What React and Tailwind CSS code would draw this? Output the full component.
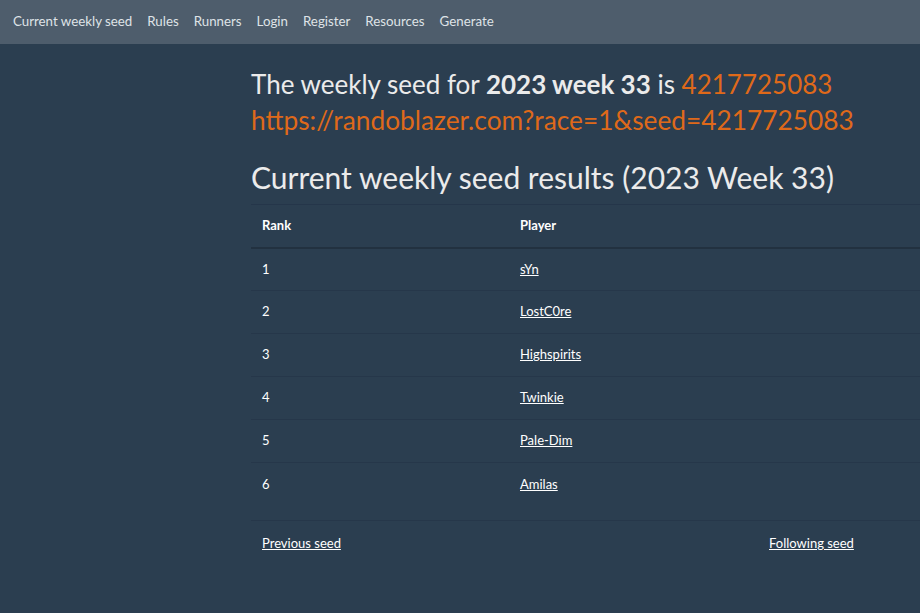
export default function App() {
  const rows = [
    [1, "sYn"],
    [2, "LostC0re"],
    [3, "Highspirits"],
    [4, "Twinkie"],
    [5, "Pale-Dim"],
    [6, "Amilas"],
  ];
  return (
    <div
      className="w-[920px] h-[613px] overflow-hidden bg-[#2b3e50] text-white"
      style={{ fontFamily: "Lato, 'Noto Sans', sans-serif" }}
    >
      <nav className="h-[44px] bg-[#4e5d6c] flex items-center pl-[13px] gap-[15px] text-[13.3px] text-[#dfe3e7]">
        <span>Current weekly seed</span>
        <span>Rules</span>
        <span>Runners</span>
        <span>Login</span>
        <span>Register</span>
        <span>Resources</span>
        <span>Generate</span>
      </nav>
      <div className="ml-[251px] w-[900px] pt-[22px]">
        <div className="text-[26px] leading-[36px] text-[#ebebeb]">
          The weekly seed for <b className="font-bold">2023 week 33</b> is{" "}
          <span className="text-[#df691a]">4217725083</span>
          <br />
          <span className="text-[#df691a] text-[26.3px]">https://randoblazer.com?race=1&amp;seed=4217725083</span>
        </div>
        <h2 className="mt-[21px] text-[30px] leading-[36px] text-[#ebebeb]">
          Current weekly seed results (2023 Week 33)
        </h2>
        <table className="mt-[9px] w-[900px] text-[13px] border-collapse">
          <thead>
            <tr className="border-t border-[#25364a] border-b-2 border-b-[#223140]">
              <th className="text-left font-bold w-[257px] px-[11px] h-[43px]">Rank</th>
              <th className="text-left font-bold px-[12px]">Player</th>
            </tr>
          </thead>
          <tbody>
            {rows.map(([r, p], i) => (
              <tr key={r} className="border-b border-[#26374a]">
                <td className={`px-[11px] ${i < 5 ? "h-[43px]" : "h-[58px] pb-[14px]"}`}>{r}</td>
                <td className={`px-[12px] ${i < 5 ? "" : "pb-[14px]"}`}>
                  <a className="underline">{p}</a>
                </td>
              </tr>
            ))}
          </tbody>
        </table>
        <div className="mt-[13px] flex text-[13px]">
          <a className="underline ml-[11px] w-[507px]">Previous seed</a>
          <a className="underline">Following seed</a>
        </div>
      </div>
    </div>
  );
}
